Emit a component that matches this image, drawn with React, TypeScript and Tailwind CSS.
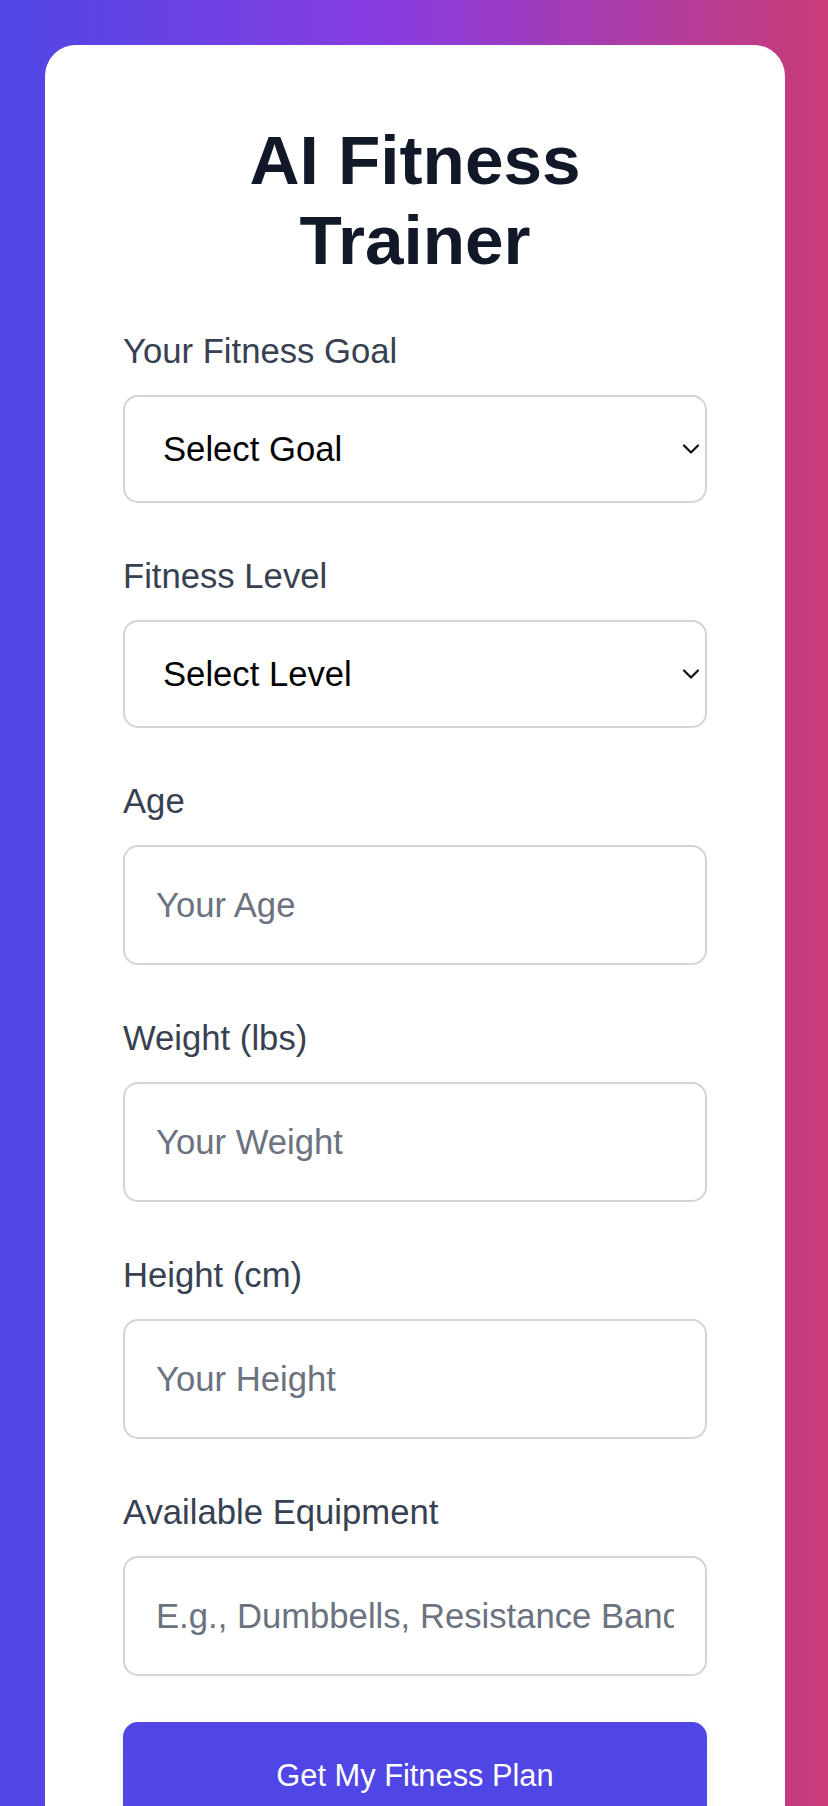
import React from "react";

function Chevron() {
  return (
    <svg
      className="pointer-events-none absolute right-[7px] top-1/2 -translate-y-1/2"
      width="18"
      height="11"
      viewBox="0 0 18 11"
      fill="none"
    >
      <path d="M2 2l7 7 7-7" stroke="#111" strokeWidth="2.2" strokeLinecap="round" strokeLinejoin="round" />
    </svg>
  );
}

function Label({ children }: { children: React.ReactNode }) {
  return <label className="block text-[34.67px] leading-[54px] text-[#374151] mb-[17px]">{children}</label>;
}

function SelectField({ label, placeholder, options }: { label: string; placeholder: string; options: string[] }) {
  return (
    <div className="mb-[46px]">
      <Label>{label}</Label>
      <div className="relative">
        <select
          defaultValue=""
          className="block w-full h-[108px] appearance-none bg-white border-2 border-[#d1d5db] rounded-[15px] pl-[38px] pr-[40px] text-[34.67px] text-black outline-none"
        >
          <option value="">{placeholder}</option>
          {options.map((o) => (
            <option key={o} value={o}>
              {o}
            </option>
          ))}
        </select>
        <Chevron />
      </div>
    </div>
  );
}

function InputField({ label, placeholder, type = "text" }: { label: string; placeholder: string; type?: string }) {
  return (
    <div className="mb-[46px]">
      <Label>{label}</Label>
      <input
        type={type}
        placeholder={placeholder}
        className="block w-full h-[120px] bg-white border-2 border-[#d1d5db] rounded-[15px] px-[31px] text-[34.67px] text-black placeholder:text-[#6b7280] outline-none"
      />
    </div>
  );
}

export default function App() {
  return (
    <div className="min-h-screen bg-[linear-gradient(to_right,#4f46e5_0%,#8a3ce0_48%,#c93c76_100%)] pt-[45px] pl-[45px] pr-[43px] font-['Liberation_Sans',Arial,sans-serif]">
      <div className="bg-white rounded-[31px] pt-[75px] px-[78px] pb-[80px]">
        <h1 className="text-center text-[69.3px] leading-[80px] font-bold text-[#111827] mb-[44px]">
          AI Fitness
          <br />
          Trainer
        </h1>
        <SelectField
          label="Your Fitness Goal"
          placeholder="Select Goal"
          options={["Lose Weight", "Build Muscle", "Improve Endurance", "Stay Fit"]}
        />
        <SelectField
          label="Fitness Level"
          placeholder="Select Level"
          options={["Beginner", "Intermediate", "Advanced"]}
        />
        <InputField label="Age" placeholder="Your Age" type="number" />
        <InputField label="Weight (lbs)" placeholder="Your Weight" type="number" />
        <InputField label="Height (cm)" placeholder="Your Height" type="number" />
        <InputField label="Available Equipment" placeholder="E.g., Dumbbells, Resistance Bands" />
        <button className="block w-full bg-[#4f46e5] text-white text-[30.8px] leading-[46px] py-[31px] rounded-[15px] shadow-[0_4px_12px_rgba(0,0,0,0.08)]">
          Get My Fitness Plan
        </button>
      </div>
    </div>
  );
}
